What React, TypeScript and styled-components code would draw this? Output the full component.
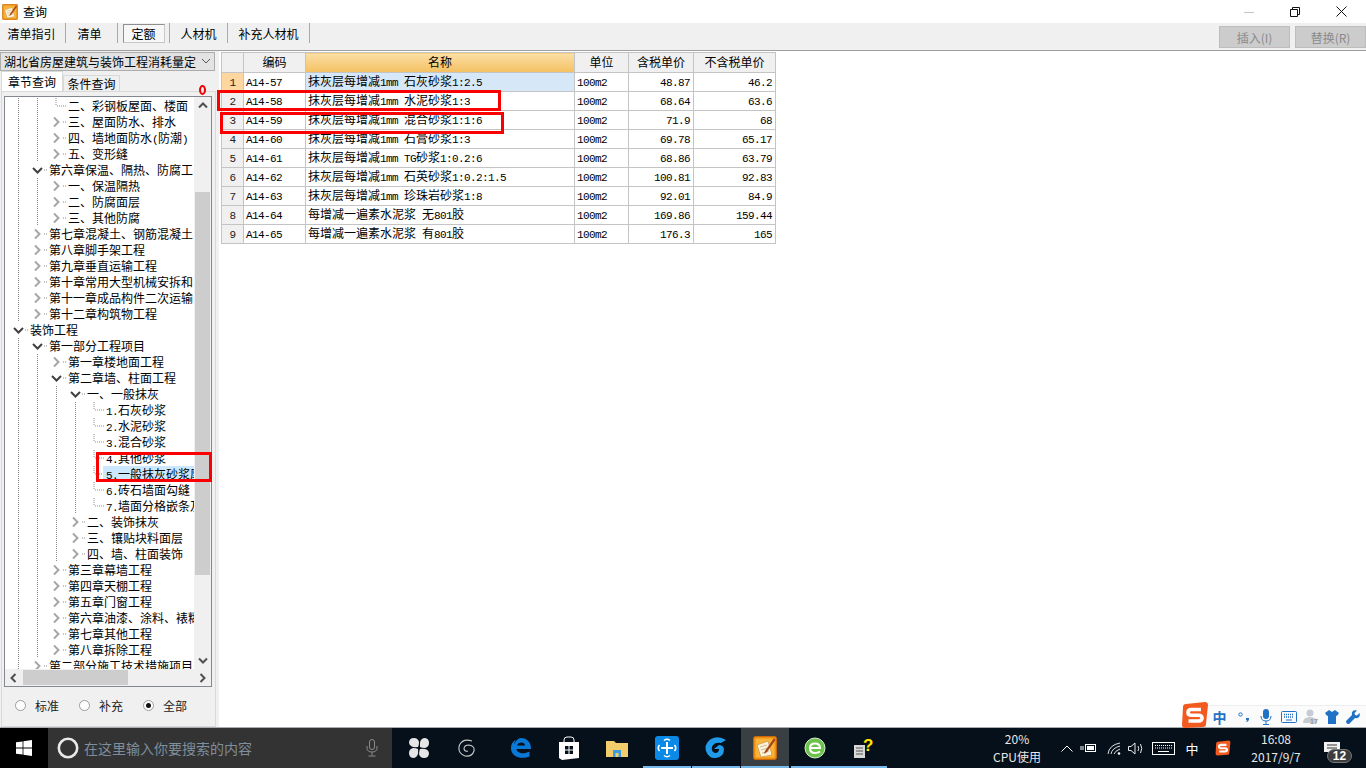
import styled, { createGlobalStyle } from "styled-components";

const GlobalStyle = createGlobalStyle`
    html, body {
        margin: 0;
        padding: 0;
        overflow: hidden;
        background: #f0f0f0;
    }
    * {
        box-sizing: border-box;
    }
`

const cjk = `"Noto Sans CJK SC", "Liberation Sans", sans-serif`;

const Page = styled.div`
    position: relative;
    width: 1366px;
    height: 768px;
    display: flex;
    flex-direction: column;
    font-family: ${cjk};
    font-size: 12px;
    color: #000;
    overflow: hidden;
`
const TitleBar = styled.div`
    height: 23px;
    flex: none;
    display: flex;
    align-items: center;
    background: #fff;
    padding-left: 2px;
    gap: 5px;
`
const WindowButtons = styled.div`
    margin-left: auto;
    padding-right: 2px;
    display: flex;
`
const WindowButton = styled.div`
    width: 46px;
    height: 23px;
    display: flex;
    align-items: center;
    justify-content: center;
`
const Toolbar = styled.div`
    height: 28px;
    flex: none;
    display: flex;
    align-items: flex-start;
    background: #f0f0f0;
    border-bottom: 1px solid #a0a0a0;
    padding-left: 2px;
`
const ToolTab = styled.div<{ $w: number; $pressed?: boolean; $shift?: number }>`
    width: ${(p) => p.$w}px;
    height: 20px;
    padding-right: ${(p) => p.$shift ?? 0}px;
    display: flex;
    align-items: center;
    justify-content: center;
    border-right: 1px solid #a9a9a9;
    & > span {
        ${(p) =>
            p.$pressed
                ? `width: 42px; height: 19px; margin-top: 1px; display: flex; align-items: center; justify-content: center;
                   background: #f7f7f7; border: 1px solid #8f8f8f; border-bottom-color: #c8c8c8; border-right-color: #c8c8c8;`
                : ""}
    }
`
const ActionButtons = styled.div`
    margin-left: auto;
    margin-top: 3px;
    display: flex;
    gap: 5px;
`
const ActionButton = styled.div`
    width: 71px;
    height: 22px;
    display: flex;
    align-items: center;
    justify-content: center;
    background: #cccccc;
    border: 1px solid #bdbdbd;
    color: #8a8a8a;
`
const Main = styled.div`
    flex: 1;
    min-height: 0;
    display: flex;
`
const LeftPanel = styled.div`
    width: 219px;
    flex: none;
    display: flex;
    flex-direction: column;
    background: #f0f0f0;
    padding-top: 1px;
`
const Combo = styled.div`
    width: 215px;
    height: 19px;
    flex: none;
    display: flex;
    align-items: center;
    justify-content: space-between;
    padding: 0 3px 1px;
    background: #e3e3e3;
    border: 1px solid #adadad;
    overflow: hidden;
    white-space: nowrap;
`
const TabStrip = styled.div`
    height: 20px;
    flex: none;
    display: flex;
    align-items: flex-end;
    padding-left: 1px;
`
const Tab = styled.div<{ $active?: boolean }>`
    display: flex;
    align-items: center;
    justify-content: center;
    width: ${(p) => (p.$active ? 62 : 57)}px;
    height: ${(p) => (p.$active ? 20 : 16)}px;
    background: ${(p) => (p.$active ? "#fff" : "#f0f0f0")};
    border: 1px solid #d9d9d9;
    border-bottom: none;
`
const TabBody = styled.div`
    flex: 1;
    min-height: 0;
    width: 215px;
    margin-left: 1px;
    display: flex;
    flex-direction: column;
    border: 1px solid #d9d9d9;
    padding: 4px 1px 0 2px;
`
const TreeBox = styled.div`
    width: 208px;
    height: 591px;
    flex: none;
    display: flex;
    flex-direction: column;
    background: #fff;
    border: 1px solid #828790;
`
const TreeArea = styled.div`
    flex: 1;
    min-height: 0;
    display: flex;
`
const TreeViewport = styled.div`
    width: 189px;
    overflow: hidden;
    padding-top: 1px;
`
const dotted = "repeating-linear-gradient(to bottom, #8a8a8a 0 1px, transparent 1px 2px)";
const TreeRowBox = styled.div<{ $level: number; $guides: number[] }>`
    height: 16px;
    display: flex;
    align-items: center;
    white-space: nowrap;
    padding-left: ${(p) => 6 + (p.$level - 1) * 19}px;
    background-repeat: no-repeat;
    background-image: ${(p) => (p.$guides.length ? p.$guides.map(() => dotted).join(",") : "none")};
    background-size: 1px 16px;
    background-position: ${(p) => p.$guides.map((g) => `${g - 5}px 0`).join(",") || "0 0"};
`
const Marker = styled.svg`
    width: 19px;
    height: 16px;
    flex: none;
`
const TreeLabel = styled.span<{ $selected?: boolean }>`
    line-height: 16px;
    height: 16px;
    padding-right: 3px;
    background: ${(p) => (p.$selected ? "#cce8ff" : "transparent")};
    ${(p) => (p.$selected ? "margin-left: -3px; padding-left: 3px; min-width: 110px;" : "")}
`
const VScroll = styled.div`
    width: 17px;
    flex: none;
    display: flex;
    flex-direction: column;
    background: #f0f0f0;
`
const ScrollEnd = styled.div`
    flex: none;
    width: 17px;
    height: 17px;
    display: flex;
    align-items: center;
    justify-content: center;
`
const VThumb = styled.div`
    width: 15px;
    height: 383px;
    margin: 78px 0 0 1px;
    background: #cdcdcd;
`
const HScroll = styled.div`
    height: 17px;
    flex: none;
    display: flex;
    background: #f0f0f0;
`
const HThumb = styled.div`
    width: 105px;
    height: 15px;
    margin: 1px 0 0 1px;
    background: #cdcdcd;
`
const HFill = styled.div`
    flex: 1;
`
const RadioRow = styled.div`
    flex: 1;
    display: flex;
    align-items: center;
    padding-left: 11px;
    padding-bottom: 2px;
    color: #222;
`
const RadioItem = styled.label`
    width: 64px;
    display: flex;
    align-items: center;
    gap: 9px;
`
const RadioDot = styled.span<{ $on?: boolean }>`
    width: 11px;
    height: 11px;
    border-radius: 50%;
    border: 1px solid #9a9a9a;
    background: #fff;
    display: flex;
    align-items: center;
    justify-content: center;
    &::after {
        content: "";
        width: 5px;
        height: 5px;
        border-radius: 50%;
        background: ${(p) => (p.$on ? "#111" : "transparent")};
    }
`
const RightPanel = styled.div`
    flex: 1;
    background: #fff;
    padding: 1px 0 0 2px;
`
const Grid = styled.table`
    border-collapse: collapse;
    table-layout: fixed;
    width: 554px;
`
const HeadCell = styled.th<{ $w: number; $hot?: boolean }>`
    width: ${(p) => p.$w}px;
    height: 20px;
    padding: 0 0 2px;
    font-weight: 400;
    font-size: 12px;
    line-height: 16px;
    background: ${(p) => (p.$hot ? "linear-gradient(#fbdfa6, #f4c061)" : "#f0f0f0")};
    border: 1px solid #c4c4c4;
`
const NumCell = styled.td<{ $active?: boolean }>`
    height: 19px;
    padding: 0 0 2px;
    line-height: 13px;
    text-align: center;
    color: #222;
    background: ${(p) => (p.$active ? "#fdd6a0" : "#f0f0f0")};
    border: 1px solid #c4c4c4;
`
const Cell = styled.td<{ $right?: boolean; $selected?: boolean }>`
    height: 19px;
    padding: 0 3px 2px 2px;
    line-height: 13px;
    white-space: nowrap;
    overflow: hidden;
    text-align: ${(p) => (p.$right ? "right" : "left")};
    background: ${(p) => (p.$selected ? "#d6e8f7" : "#fff")};
    border: 1px solid #c4c4c4;
`
const Latin = styled.span`
    font-family: "Liberation Mono", monospace;
    font-size: 11px;
    line-height: 11px;
    letter-spacing: -0.6px;
`
const RedBox = styled.div<{ $x: number; $y: number; $w: number; $h: number }>`
    position: absolute;
    left: ${(p) => p.$x}px;
    top: ${(p) => p.$y}px;
    width: ${(p) => p.$w}px;
    height: ${(p) => p.$h}px;
    border: 3px solid #fa0000;
`
const RedMark = styled.div`
    position: absolute;
    left: 199px;
    top: 85px;
    width: 7px;
    height: 10px;
    border: 2px solid #f00000;
    border-radius: 50%;
`
const Taskbar = styled.div`
    height: 41px;
    flex: none;
    display: flex;
    align-items: stretch;
    background: #05101a;
    color: #fff;
    border-top: 1px solid #a8acb0;
`
const StartButton = styled.div`
    width: 48px;
    flex: none;
    display: flex;
    align-items: center;
    justify-content: center;
    background: #000;
`
const SearchBox = styled.div`
    width: 344px;
    flex: none;
    display: flex;
    align-items: center;
    background: #333333;
    padding-left: 9px;
    gap: 5px;
    font-size: 14px;
    color: #7f8e9b;
`
const SearchMic = styled.span`
    margin-left: auto;
    margin-right: 14px;
    display: flex;
`
const TaskIcon = styled.div<{ $ml?: number; $active?: boolean; $running?: boolean }>`
    width: 48px;
    flex: none;
    margin-left: ${(p) => p.$ml ?? 0}px;
    display: flex;
    align-items: center;
    justify-content: center;
    background: ${(p) => (p.$active ? "#3a3f44" : "transparent")};
    border-bottom: 2px solid ${(p) => (p.$running ? "#76b9ed" : "transparent")};
    padding-top: 2px;
`
const Tray = styled.div`
    margin-left: auto;
    display: flex;
    align-items: center;
`
const TrayCell = styled.div<{ $w: number; $ml?: number }>`
    width: ${(p) => p.$w}px;
    margin-left: ${(p) => p.$ml ?? 0}px;
    flex: none;
    display: flex;
    align-items: center;
    justify-content: center;
    font-size: 13px;
`
const TrayStack = styled.div<{ $w: number; $ml?: number }>`
    width: ${(p) => p.$w}px;
    margin-left: ${(p) => p.$ml ?? 0}px;
    flex: none;
    display: flex;
    flex-direction: column;
    align-items: center;
    font-size: 12px;
    line-height: 18px;
    color: #e8e8e8;
`
const NotifyBadge = styled.span`
    position: absolute;
    left: 1327px;
    top: 749px;
    width: 25px;
    height: 14px;
    border-radius: 7px;
    background: #3c3c3c;
    border: 1px solid #777;
    color: #fff;
    font-family: "Liberation Sans", sans-serif;
    font-size: 12px;
    font-weight: 700;
    line-height: 12px;
    text-align: center;
`
const ImeBar = styled.div`
    position: absolute;
    right: 0;
    top: 705px;
    width: 161px;
    height: 22px;
    display: flex;
    align-items: center;
    background: #fbfbfb;
    border-top: 1px solid #eeeeee;
    border-left: 1px solid #eeeeee;
`
const ImeCell = styled.div<{ $w: number }>`
    width: ${(p) => p.$w}px;
    flex: none;
    display: flex;
    align-items: center;
    justify-content: center;
    color: #1f72c6;
    font-weight: 700;
    font-size: 14px;
`
const ImeLogo = styled.div`
    position: absolute;
    left: 1181px;
    top: 701px;
    width: 28px;
    height: 28px;
    display: flex;
`

// 中文和西文分开排，西文按半角宽度
function Mixed({ text }: { text: string }) {
    const parts = text.match(/[\x20-\x7e]+|[^\x20-\x7e]+/g) ?? [];
    return (
        <>
            {parts.map((part, i) =>
                /^[\x20-\x7e]/.test(part) ? <Latin key={i}>{part}</Latin> : <span key={i}>{part}</span>
            )}
        </>
    );
}

type Kind = "open" | "closed" | "leaf" | "elbow";

function TreeMarker({ kind }: { kind: Kind }) {
    return (
        <Marker viewBox="0 0 19 16">
            {kind === "leaf" && <path d="M7 0V8M8 8H17" stroke="#8a8a8a" strokeDasharray="1 1" fill="none" />}
            {kind === "elbow" && <path d="M7 8H17" stroke="#8a8a8a" strokeDasharray="1 1" fill="none" />}
            {kind === "closed" && (
                <>
                    <rect x="1" y="0" width="12" height="16" fill="#fff" />
                    <path d="M5 3.5L9.5 8L5 12.5" stroke="#a6a6a6" strokeWidth="2" fill="none" />
                    <path d="M14 8H17" stroke="#8a8a8a" strokeDasharray="1 1" />
                </>
            )}
            {kind === "open" && (
                <>
                    <rect x="1" y="0" width="12" height="16" fill="#fff" />
                    <path d="M3 6L7.5 10.5L12 6" stroke="#404040" strokeWidth="2" fill="none" />
                    <path d="M14 8H17" stroke="#8a8a8a" strokeDasharray="1 1" />
                </>
            )}
        </Marker>
    );
}

interface TreeItem {
    level: number;
    kind: Kind;
    text: string;
    guides: number[];
    selected?: boolean;
}

const A = [18];
const B = [18, 37];
const C = [18, 37, 56];
const D = [18, 37, 56, 75];

const treeItems: TreeItem[] = [
    { level: 3, kind: "leaf", text: "二、彩钢板屋面、楼面", guides: B },
    { level: 3, kind: "closed", text: "三、屋面防水、排水", guides: B },
    { level: 3, kind: "closed", text: "四、墙地面防水(防潮)", guides: B },
    { level: 3, kind: "closed", text: "五、变形缝", guides: B },
    { level: 2, kind: "open", text: "第六章保温、隔热、防腐工", guides: A },
    { level: 3, kind: "closed", text: "一、保温隔热", guides: B },
    { level: 3, kind: "closed", text: "二、防腐面层", guides: B },
    { level: 3, kind: "closed", text: "三、其他防腐", guides: B },
    { level: 2, kind: "closed", text: "第七章混凝土、钢筋混凝土", guides: A },
    { level: 2, kind: "closed", text: "第八章脚手架工程", guides: A },
    { level: 2, kind: "closed", text: "第九章垂直运输工程", guides: A },
    { level: 2, kind: "closed", text: "第十章常用大型机械安拆和", guides: A },
    { level: 2, kind: "closed", text: "第十一章成品构件二次运输", guides: A },
    { level: 2, kind: "closed", text: "第十二章构筑物工程", guides: A },
    { level: 1, kind: "open", text: "装饰工程", guides: [] },
    { level: 2, kind: "open", text: "第一部分工程项目", guides: A },
    { level: 3, kind: "closed", text: "第一章楼地面工程", guides: B },
    { level: 3, kind: "open", text: "第二章墙、柱面工程", guides: B },
    { level: 4, kind: "open", text: "一、一般抹灰", guides: C },
    { level: 5, kind: "leaf", text: "1.石灰砂浆", guides: D },
    { level: 5, kind: "leaf", text: "2.水泥砂浆", guides: D },
    { level: 5, kind: "leaf", text: "3.混合砂浆", guides: D },
    { level: 5, kind: "leaf", text: "4.其他砂浆", guides: D },
    { level: 5, kind: "leaf", text: "5.一般抹灰砂浆厚度调整", guides: D, selected: true },
    { level: 5, kind: "leaf", text: "6.砖石墙面勾缝", guides: D },
    { level: 5, kind: "leaf", text: "7.墙面分格嵌条及其他", guides: D },
    { level: 4, kind: "closed", text: "二、装饰抹灰", guides: C },
    { level: 4, kind: "closed", text: "三、镶贴块料面层", guides: C },
    { level: 4, kind: "closed", text: "四、墙、柱面装饰", guides: C },
    { level: 3, kind: "closed", text: "第三章幕墙工程", guides: B },
    { level: 3, kind: "closed", text: "第四章天棚工程", guides: B },
    { level: 3, kind: "closed", text: "第五章门窗工程", guides: B },
    { level: 3, kind: "closed", text: "第六章油漆、涂料、裱糊工程", guides: B },
    { level: 3, kind: "closed", text: "第七章其他工程", guides: B },
    { level: 3, kind: "closed", text: "第八章拆除工程", guides: B },
    { level: 2, kind: "closed", text: "第二部分施工技术措施项目", guides: A },
];

const gridRows = [
    ["A14-57", "抹灰层每增减1mm 石灰砂浆1:2.5", "48.87", "46.2"],
    ["A14-58", "抹灰层每增减1mm 水泥砂浆1:3", "68.64", "63.6"],
    ["A14-59", "抹灰层每增减1mm 混合砂浆1:1:6", "71.9", "68"],
    ["A14-60", "抹灰层每增减1mm 石膏砂浆1:3", "69.78", "65.17"],
    ["A14-61", "抹灰层每增减1mm TG砂浆1:0.2:6", "68.86", "63.79"],
    ["A14-62", "抹灰层每增减1mm 石英砂浆1:0.2:1.5", "100.81", "92.83"],
    ["A14-63", "抹灰层每增减1mm 珍珠岩砂浆1:8", "92.01", "84.9"],
    ["A14-64", "每增减一遍素水泥浆 无801胶", "169.86", "159.44"],
    ["A14-65", "每增减一遍素水泥浆 有801胶", "176.3", "165"],
];

function NotepadIcon({ size }: { size: number }) {
    return (
        <svg width={size} height={size} viewBox="0 0 24 24">
            <rect x="0.5" y="0.5" width="23" height="23" rx="2" fill="#f08c10" stroke="#c96a08" />
            <rect x="2.5" y="2.5" width="19" height="19" fill="#f9b53a" />
            <path d="M4 9L15 5L19 19L8 21Z" fill="#fbf3dc" stroke="#b98a4a" strokeWidth="0.6" />
            <path d="M7 11L14 9M8 14L15 12M9 17L16 15" stroke="#c8a878" strokeWidth="0.8" />
            <path d="M21 2L12 15L11 18L14 16L22.5 4Z" fill="#a8451a" />
        </svg>
    );
}

function SogouLogo({ size }: { size: number }) {
    return (
        <svg width={size} height={size} viewBox="0 0 28 28">
            <path d="M5 3L24 1Q27 1 27 4L25 23Q25 26 22 26L4 27Q1 27 1 24L2 6Q2 3 5 3Z" fill="#f25a1f" />
            <path d="M20 8.5H10.5Q7 8.5 7 11.5Q7 14.3 10.5 14.3H17.5Q21 14.3 21 17Q21 20 17.5 20H7.5" fill="none" stroke="#fff" strokeWidth="3.6" />
        </svg>
    );
}

export default function App() {
    return (
        <Page>
            <GlobalStyle />
            <TitleBar>
                <NotepadIcon size={16} />
                <span>查询</span>
                <WindowButtons>
                    <WindowButton>
                        <svg width="10" height="10"><path d="M0 5.5H10" stroke="#c4c4c4" /></svg>
                    </WindowButton>
                    <WindowButton>
                        <svg width="10" height="10"><path d="M2.5 2.5V.5H9.5V7.5H7.5M.5 2.5H7.5V9.5H.5Z" stroke="#111" fill="none" /></svg>
                    </WindowButton>
                    <WindowButton>
                        <svg width="11" height="11"><path d="M.5 .5L10.5 10.5M10.5 .5L.5 10.5" stroke="#111" /></svg>
                    </WindowButton>
                </WindowButtons>
            </TitleBar>
            <Toolbar>
                <ToolTab $w={64} $shift={4}><span>清单指引</span></ToolTab>
                <ToolTab $w={52} $shift={4}><span>清单</span></ToolTab>
                <ToolTab $w={52} $pressed><span>定额</span></ToolTab>
                <ToolTab $w={58}><span>人材机</span></ToolTab>
                <ToolTab $w={82}><span>补充人材机</span></ToolTab>
                <ActionButtons>
                    <ActionButton>插入(I)</ActionButton>
                    <ActionButton>替换(R)</ActionButton>
                </ActionButtons>
            </Toolbar>
            <Main>
                <LeftPanel>
                    <Combo>
                        <span>湖北省房屋建筑与装饰工程消耗量定</span>
                        <svg width="10" height="6"><path d="M1 1L5 5L9 1" stroke="#555" fill="none" /></svg>
                    </Combo>
                    <TabStrip>
                        <Tab $active>章节查询</Tab>
                        <Tab>条件查询</Tab>
                    </TabStrip>
                    <TabBody>
                        <TreeBox>
                            <TreeArea>
                                <TreeViewport>
                                    {treeItems.map((item) => (
                                        <TreeRowBox key={item.text} $level={item.level} $guides={item.guides}>
                                            <TreeMarker kind={item.kind} />
                                            <TreeLabel $selected={item.selected}>
                                                <Mixed text={item.text} />
                                            </TreeLabel>
                                        </TreeRowBox>
                                    ))}
                                </TreeViewport>
                                <VScroll>
                                    <ScrollEnd>
                                        <svg width="10" height="7"><path d="M1 5.5L5 1.5L9 5.5" stroke="#505050" strokeWidth="2" fill="none" /></svg>
                                    </ScrollEnd>
                                    <VThumb />
                                    <HFill />
                                    <ScrollEnd>
                                        <svg width="10" height="7"><path d="M1 1.5L5 5.5L9 1.5" stroke="#505050" strokeWidth="2" fill="none" /></svg>
                                    </ScrollEnd>
                                </VScroll>
                            </TreeArea>
                            <HScroll>
                                <ScrollEnd>
                                    <svg width="7" height="10"><path d="M5.5 1L1.5 5L5.5 9" stroke="#505050" strokeWidth="2" fill="none" /></svg>
                                </ScrollEnd>
                                <HThumb />
                                <HFill />
                                <ScrollEnd>
                                    <svg width="7" height="10"><path d="M1.5 1L5.5 5L1.5 9" stroke="#505050" strokeWidth="2" fill="none" /></svg>
                                </ScrollEnd>
                            </HScroll>
                        </TreeBox>
                        <RadioRow>
                            <RadioItem><RadioDot />标准</RadioItem>
                            <RadioItem><RadioDot />补充</RadioItem>
                            <RadioItem><RadioDot $on />全部</RadioItem>
                        </RadioRow>
                    </TabBody>
                </LeftPanel>
                <RightPanel>
                    <Grid>
                        <thead>
                            <tr>
                                <HeadCell $w={22} />
                                <HeadCell $w={62}>编码</HeadCell>
                                <HeadCell $w={269} $hot>名称</HeadCell>
                                <HeadCell $w={54}>单位</HeadCell>
                                <HeadCell $w={65}>含税单价</HeadCell>
                                <HeadCell $w={82}>不含税单价</HeadCell>
                            </tr>
                        </thead>
                        <tbody>
                            {gridRows.map((row, i) => (
                                <tr key={row[0]}>
                                    <NumCell $active={i === 0}><Latin>{i + 1}</Latin></NumCell>
                                    <Cell><Latin>{row[0]}</Latin></Cell>
                                    <Cell $selected={i === 0}><Mixed text={row[1]} /></Cell>
                                    <Cell><Latin>100m2</Latin></Cell>
                                    <Cell $right><Latin>{row[2]}</Latin></Cell>
                                    <Cell $right><Latin>{row[3]}</Latin></Cell>
                                </tr>
                            ))}
                        </tbody>
                    </Grid>
                </RightPanel>
            </Main>
            <Taskbar>
                <StartButton>
                    <svg width="16" height="16" viewBox="0 0 16 16">
                        <path d="M0 2.3L6.6 1.4V7.6H0ZM7.4 1.3L16 0V7.6H7.4ZM0 8.4H6.6V14.6L0 13.7ZM7.4 8.4H16V16L7.4 14.7Z" fill="#fff" />
                    </svg>
                </StartButton>
                <SearchBox>
                    <svg width="22" height="22" viewBox="0 0 22 22">
                        <circle cx="11" cy="11" r="9.2" fill="none" stroke="#e8e8e8" strokeWidth="2.6" />
                    </svg>
                    在这里输入你要搜索的内容
                    <SearchMic>
                        <svg width="12" height="18" viewBox="0 0 12 18" fill="none" stroke="#8a8a8a">
                            <rect x="3.5" y="0.5" width="5" height="10" rx="2.5" />
                            <path d="M1 7V9Q1 13 6 13Q11 13 11 9V7M6 13V16.5M2.5 17H9.5" />
                        </svg>
                    </SearchMic>
                </SearchBox>
                <TaskIcon $ml={3}>
                    <svg width="22" height="22" viewBox="0 0 22 22" fill="#e6e6e6">
                        <path d="M10 10Q2 11 1 6Q1 1 6 1Q10 1 11 5Q11 8 10 10Z" />
                        <path d="M12 10Q11 2 16 1Q21 1 21 6Q21 10 17 11Q14 11 12 10Z" />
                        <path d="M12 12Q20 11 21 16Q21 21 16 21Q12 21 11 17Q11 14 12 12Z" />
                        <path d="M10 12Q11 20 6 21Q1 21 1 16Q1 12 5 11Q8 11 10 12Z" />
                    </svg>
                </TaskIcon>
                <TaskIcon>
                    <svg width="20" height="20" viewBox="0 0 20 20" fill="none" stroke="#c9c9c9" strokeWidth="1.1">
                        <path d="M15 3Q6 0 2.500 7Q0 15 8 18Q15 19 17 13Q18 8 12 7Q7 7 7 11Q8 14 11 13" />
                    </svg>
                </TaskIcon>
                <TaskIcon $ml={6}>
                    <svg width="22" height="22" viewBox="0 0 22 22">
                        <path d="M11 1C17 1 21 5 21 12H6.500C7 16 13 18 19.500 14.500V19.500C12 22.500 1 20.500 1 11C1 7 3 4 6 3C5 4 4 6 4 7C6 4 8 1 11 1ZM7 8.500H15C15 4.500 8 4.500 7 8.500Z" fill="#0a78d6" />
                    </svg>
                </TaskIcon>
                <TaskIcon>
                    <svg width="22" height="24" viewBox="0 0 22 24">
                        <path d="M6 6V4Q6 1 9 1H13Q16 1 16 4V6" fill="none" stroke="#fff" />
                        <path d="M1 6H21V22L4 24L1 22Z" fill="#fff" />
                        <path d="M7 10H10.500V13.500H7ZM11.500 10H15V13.500H11.500ZM7 14.500H10.500V18H7ZM11.500 14.500H15V18H11.500Z" fill="#05101a" />
                    </svg>
                </TaskIcon>
                <TaskIcon>
                    <svg width="22" height="18" viewBox="0 0 22 18">
                        <path d="M0 2H8L10 4H22V18H0Z" fill="#f3cd6b" />
                        <path d="M7 11H15V18H7Z" fill="#3d9be0" />
                        <path d="M9.500 14H12.500V18H9.500Z" fill="#f3cd6b" />
                    </svg>
                </TaskIcon>
                <TaskIcon $ml={2} $running>
                    <svg width="24" height="24" viewBox="0 0 24 24">
                        <rect width="24" height="24" rx="3" fill="#0a8ae6" />
                        <path d="M12 6V18M6 12H18" stroke="#fff" strokeWidth="2" />
                        <path d="M9 4.500Q12 2 15 4.500M9 19.500Q12 22 15 19.500M4.500 9Q2 12 4.500 15M19.500 9Q22 12 19.500 15" stroke="#fff" strokeWidth="1.600" fill="none" />
                    </svg>
                </TaskIcon>
                <TaskIcon $ml={1} $running>
                    <svg width="24" height="24" viewBox="0 0 24 24">
                        <path d="M22 4Q14 -1 7 3Q0 8 2 15Q5 23 12 22Q20 21 20 13Q19 9 15 9L10 13H15Q15 17 11 17Q7 16 8 11Q10 6 17 7Z" fill="#1f9bea" />
                    </svg>
                </TaskIcon>
                <TaskIcon $ml={1} $active $running>
                    <NotepadIcon size={24} />
                </TaskIcon>
                <TaskIcon $ml={2} $running>
                    <svg width="24" height="24" viewBox="0 0 24 24">
                        <circle cx="12" cy="12" r="10" fill="#6cc24a" stroke="#d9f2cf" />
                        <path d="M6.500 12H17Q17 7.500 12 7.500Q7 7.500 7 12Q7 17 12 17Q15 17 17 15.500" fill="none" stroke="#fff" strokeWidth="2" />
                    </svg>
                </TaskIcon>
                <TaskIcon $running>
                    <svg width="22" height="22" viewBox="0 0 22 22">
                        <rect x="2" y="8" width="11" height="13" fill="#d8d8d8" />
                        <path d="M4 11H11M4 14H11M4 17H11" stroke="#555" />
                        <text x="11" y="14" fontSize="17" fontWeight="700" fontFamily="Liberation Sans" fill="#ffe600">?</text>
                    </svg>
                </TaskIcon>
                <Tray>
                    <TrayStack $w={70}>
                        <span>20%</span>
                        <span>CPU使用</span>
                    </TrayStack>
                    <TrayCell $w={16} $ml={7}>
                        <svg width="12" height="7"><path d="M.5 6.500L6 1L11.500 6.500" stroke="#fff" fill="none" /></svg>
                    </TrayCell>
                    <TrayCell $w={18} $ml={4}>
                        <svg width="16" height="10" viewBox="0 0 16 10" fill="none" stroke="#fff">
                            <rect x="5.500" y="1.500" width="10" height="7" />
                            <path d="M7 3H14V7H7Z" fill="#fff" stroke="none" />
                            <path d="M0 4H4M0 6H4" />
                        </svg>
                    </TrayCell>
                    <TrayCell $w={16} $ml={9}>
                        <svg width="14" height="13" viewBox="0 0 14 13" fill="none" stroke="#e0e0e0">
                            <path d="M1 12Q2 3 13 1M4 12Q5 6 13 4M7 12Q8 9 13 7" />
                            <circle cx="12" cy="11.500" r="1.300" fill="#fff" stroke="none" />
                        </svg>
                    </TrayCell>
                    <TrayCell $w={18} $ml={5}>
                        <svg width="16" height="13" viewBox="0 0 16 13" fill="none" stroke="#e8e8e8">
                            <path d="M.5 4.500H3L7 1V12L3 8.500H.5Z" />
                            <path d="M10 4Q11.500 6.500 10 9M12.500 2Q15 6.500 12.500 11" />
                        </svg>
                    </TrayCell>
                    <TrayCell $w={24} $ml={6}>
                        <svg width="23" height="13" viewBox="0 0 23 13" fill="none" stroke="#fff">
                            <rect x=".5" y=".5" width="22" height="12" />
                            <path d="M3 3.500H20M3 6H20" strokeDasharray="1 1" />
                            <path d="M6 9.500H17" />
                        </svg>
                    </TrayCell>
                    <TrayCell $w={14} $ml={10}>中</TrayCell>
                    <TrayCell $w={18} $ml={15}><SogouLogo size={16} /></TrayCell>
                    <TrayStack $w={80} $ml={4}>
                        <span>16:08</span>
                        <span>2017/9/7</span>
                    </TrayStack>
                    <TrayCell $w={22} $ml={5}>
                        <svg width="16" height="13" viewBox="0 0 16 13">
                            <path d="M0 0H16V10H7L4 13V10H0Z" fill="#f2f2f2" />
                            <path d="M3 3H13M3 6H13" stroke="#333" />
                        </svg>
                    </TrayCell>
                    <TrayCell $w={23} />
                </Tray>
            </Taskbar>
            <NotifyBadge>12</NotifyBadge>
            <ImeBar>
                <ImeCell $w={27}>中</ImeCell>
                <ImeCell $w={22}>
                    <svg width="12" height="10" viewBox="0 0 12 10" fill="#1f72c6">
                        <circle cx="2.500" cy="2.500" r="1.700" fill="none" stroke="#1f72c6" />
                        <path d="M8 6H11V7Q11 9 9 10L8 9.500Q9 9 9 8H8Z" />
                    </svg>
                </ImeCell>
                <ImeCell $w={22}>
                    <svg width="12" height="16" viewBox="0 0 12 16">
                        <rect x="3" y="0" width="6" height="10" rx="3" fill="#1f72c6" />
                        <path d="M1 7Q1 12 6 12Q11 12 11 7M6 12V15M3 15.500H9" stroke="#1f72c6" fill="none" />
                    </svg>
                </ImeCell>
                <ImeCell $w={23}>
                    <svg width="16" height="12" viewBox="0 0 16 12" fill="none" stroke="#1f72c6">
                        <rect x=".5" y=".5" width="15" height="11" rx="1" />
                        <path d="M3 3.500H13M3 6H13" strokeDasharray="1 1" strokeWidth="1.500" />
                        <path d="M5 9H11" />
                    </svg>
                </ImeCell>
                <ImeCell $w={21}>
                    <svg width="16" height="15" viewBox="0 0 16 15">
                        <circle cx="7" cy="4" r="3.500" fill="#c6ccd2" />
                        <path d="M0 14Q0 8 7 8Q14 8 14 14Z" fill="#c6ccd2" />
                        <text x="7" y="14.500" fontSize="7" fontWeight="700" fontFamily="Liberation Sans" fill="#8f979f">17</text>
                    </svg>
                </ImeCell>
                <ImeCell $w={21}>
                    <svg width="14" height="14" viewBox="0 0 14 14">
                        <path d="M4 0L7 2L10 0L14 3L12 6L11 5.500V14H3V5.500L2 6L0 3Z" fill="#1f72c6" />
                    </svg>
                </ImeCell>
                <ImeCell $w={22}>
                    <svg width="14" height="14" viewBox="0 0 14 14" fill="#1f72c6">
                        <path d="M13.500 3L11 5.500L9 5L8.500 3L11 .5Q8 -.5 6.500 1.500Q5.500 3 6 5L.5 10.500Q-.5 12 1 13.500Q2.500 14.500 3.500 13.500L9 8Q11 8.500 12.500 7.500Q14.500 6 13.500 3Z" />
                    </svg>
                </ImeCell>
            </ImeBar>
            <ImeLogo><SogouLogo size={28} /></ImeLogo>
            <RedMark />
            <RedBox $x={217} $y={90} $w={284} $h={21} />
            <RedBox $x={220} $y={112} $w={284} $h={22} />
            <RedBox $x={96} $y={452} $w={116} $h={30} />
        </Page>
    );
}
